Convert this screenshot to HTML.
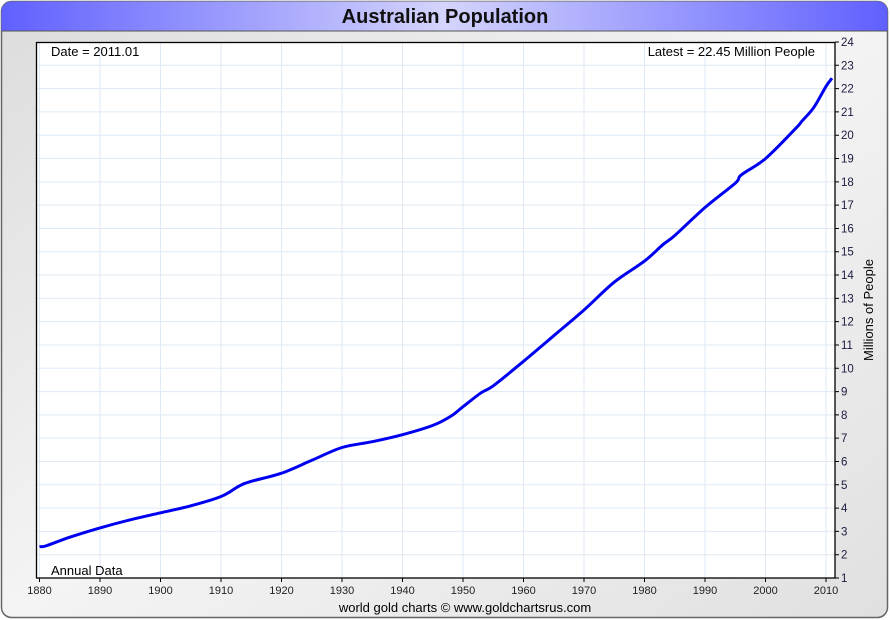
<!DOCTYPE html>
<html><head><meta charset="utf-8"><style>
body{margin:0;width:890px;height:620px;overflow:hidden;background:#fff;font-family:"Liberation Sans",sans-serif}
</style></head><body>
<svg width="890" height="620" xmlns="http://www.w3.org/2000/svg" style="position:absolute;left:0;top:0">
<defs>
<linearGradient id="hd" x1="0" x2="1" y1="0" y2="0">
<stop offset="0" stop-color="#6060ff"/><stop offset="0.5" stop-color="#d4d4fc"/><stop offset="1" stop-color="#6060ff"/>
</linearGradient>
<linearGradient id="bg" x1="0" x2="1" y1="0" y2="1">
<stop offset="0" stop-color="#dcdcdc"/><stop offset="0.5" stop-color="#f4f4f4"/><stop offset="1" stop-color="#e0e0e0"/>
</linearGradient>
</defs>
<rect x="1.5" y="1.5" width="886" height="616" rx="10" fill="url(#bg)" stroke="#666" stroke-width="1.5"/>
<path d="M1.5 31 V11.5 A10 10 0 0 1 11.5 1.5 H877.5 A10 10 0 0 1 887.5 11.5 V31 Z" fill="url(#hd)"/>
<line x1="1.5" y1="31" x2="887.5" y2="31" stroke="#555" stroke-width="1"/>
<text x="445" y="23" text-anchor="middle" font-size="20" font-weight="bold" fill="#111">Australian Population</text>
<rect x="36" y="42" width="799" height="536" fill="#fff"/>
<g stroke="#dfeaf5" stroke-width="1">
<path d="M39.5 42V578M100 42V578M160.5 42V578M221 42V578M281.5 42V578M342 42V578M402.5 42V578M463 42V578M523.5 42V578M584 42V578M644.5 42V578M705 42V578M765.5 42V578M826 42V578"/>
</g>
<g stroke="#dfeaf5" stroke-width="1" id="hlines"></g>
<rect x="36.5" y="42.5" width="798.5" height="535.5" fill="none" stroke="#000" stroke-width="1.3"/>
<path fill="none" stroke="#0000f0" stroke-width="3" stroke-linejoin="round" id="curve"/>
<text x="51" y="56" font-size="13" fill="#000">Date = 2011.01</text>
<text x="815" y="56" font-size="13" fill="#000" text-anchor="end">Latest = 22.45 Million People</text>
<text x="51" y="575" font-size="13" fill="#000">Annual Data</text>
<g id="xl" font-size="11" fill="#222" text-anchor="middle"></g>
<g id="yl" font-size="11.5" fill="#1a1a40"></g>
<text transform="translate(873,310) rotate(-90)" text-anchor="middle" font-size="13" fill="#000">Millions of People</text>
<text x="465" y="612" text-anchor="middle" font-size="13" fill="#000">world gold charts © www.goldchartsrus.com</text>
</svg>
<script>
var ns="http://www.w3.org/2000/svg",s=document.querySelector('svg');
var hl=document.getElementById('hlines'),yl=document.getElementById('yl'),xl=document.getElementById('xl');
var d="";for(var v=1;v<=24;v++){var y=578-(v-1)*23.304;if(v>1&&v<24)d+="M36 "+y+"H835";
var t=document.createElementNS(ns,'text');t.setAttribute('x',841);t.setAttribute('y',y+4);t.textContent=v;yl.appendChild(t);
d+="M835 "+y+"H839";}
var p=document.createElementNS(ns,'path');p.setAttribute('d',d);hl.appendChild(p);
var tk="";for(var i=0;i<14;i++){var x=39.5+i*60.5;var t=document.createElementNS(ns,'text');t.setAttribute('x',x);t.setAttribute('y',594);t.textContent=1880+i*10;xl.appendChild(t);tk+="M"+x+" 578V582";}
var p2=document.createElementNS(ns,'path');p2.setAttribute('d',tk);p2.setAttribute('stroke','#000');s.appendChild(p2);
var p3=document.createElementNS(ns,'path');p3.setAttribute('d',d.replace(/M36 [\d.]+H835/g,''));p3.setAttribute('stroke','#000');s.appendChild(p3);
// smooth curve via Catmull-Rom
var P=[[39.5,546.5],[45.6,546],[69.8,537.2],[100,527.9],[130.3,519.8],[160.5,512.8],[190.8,505.8],[221,496.5],[239.2,486],[251.3,481.3],[281.5,473.2],[311.8,460.3],[342,447.5],[372.3,441.7],[402.5,434.7],[432.8,425.4],[451,416.1],[463,406.7],[481,392.8],[493.3,385.8],[523.5,361.3],[553.8,335.7],[584,310],[614.3,282.1],[644.5,261.1],[662.7,244.8],[674.8,235.5],[705,207.5],[735.3,183.1],[741.3,174.9],[765.5,158.6],[795.8,128.3],[801.8,121.3],[813.9,107.3],[826,86.4],[832,78.2]];
var c="M"+P[0];for(var i=0;i<P.length-1;i++){var p0=P[Math.max(0,i-1)],p1=P[i],q=P[i+1],p3_=P[Math.min(P.length-1,i+2)];
c+="C"+(p1[0]+(q[0]-p0[0])/6)+","+(p1[1]+(q[1]-p0[1])/6)+" "+(q[0]-(p3_[0]-p1[0])/6)+","+(q[1]-(p3_[1]-p1[1])/6)+" "+q[0]+","+q[1];}
document.getElementById('curve').setAttribute('d',c);
</script>
</body></html>
